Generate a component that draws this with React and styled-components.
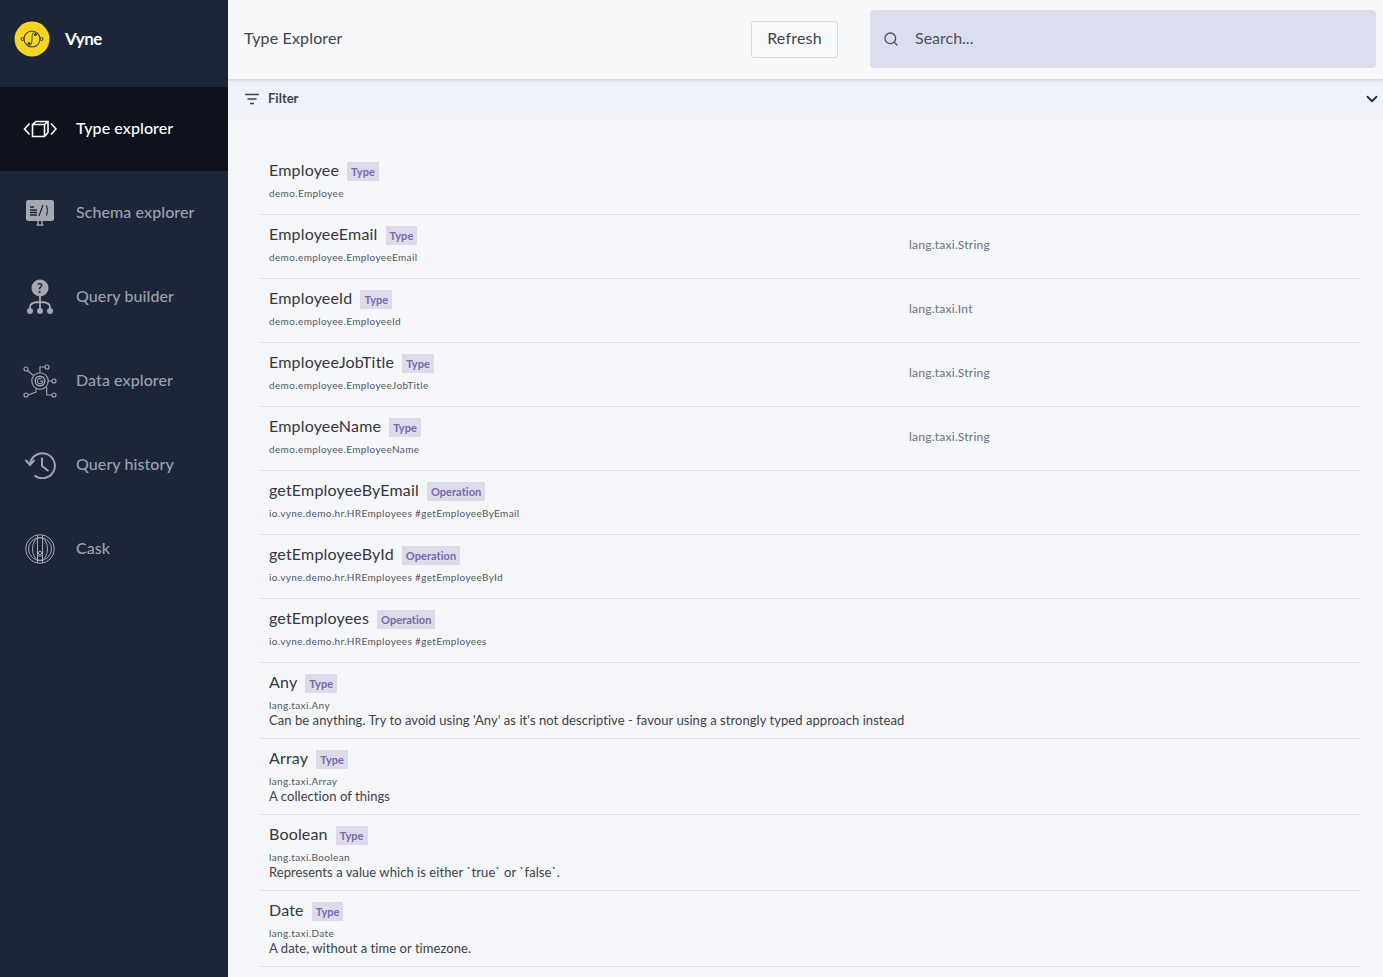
import React from 'react'
import styled, { createGlobalStyle } from 'styled-components'
import { Search, ChevronDown } from 'lucide-react'

const GlobalStyle = createGlobalStyle`
    html, body {
        margin: 0;
        padding: 0;
        height: 100%;
        overflow: hidden;
        font-family: Lato, "Open Sans", sans-serif;
        background: #f5f6fa;
    }
    * { box-sizing: border-box; }
`

const Page = styled.div`
    display: flex;
    width: 1383px;
    height: 977px;
    overflow: hidden;
`

const Sidebar = styled.nav`
    width: 228px;
    flex-shrink: 0;
    background: #1d2639;
    display: flex;
    flex-direction: column;
`

const Brand = styled.div`
    height: 79px;
    margin-bottom: 8px;
    display: flex;
    align-items: center;
    padding-left: 14px;
    gap: 15px;
    border-bottom: 1px solid #182031;
`

const BrandName = styled.span`
    color: #fff;
    font-size: 17px;
    font-weight: 700;
    letter-spacing: -0.6px;
    margin-bottom: 2px;
`

const NavItem = styled.div`
    height: 84px;
    display: flex;
    align-items: center;
    gap: 16px;
    padding-left: 20px;
    background: ${p => (p.$active ? '#0d121c' : 'transparent')};
    color: ${p => (p.$active ? '#ffffff' : '#9ca1ab')};
    font-size: 16px;
    font-weight: 500;
    letter-spacing: 0.08px;
`

const NavIcon = styled.span`
    width: 40px;
    height: 40px;
    display: flex;
    align-items: center;
    justify-content: center;
    flex-shrink: 0;
`

const NavLabel = styled.span`
    margin-bottom: 4px;
`

const Main = styled.main`
    flex: 1;
    min-width: 0;
    display: flex;
    flex-direction: column;
`

const Header = styled.header`
    height: 79px;
    background: #f7f8fa;
    display: flex;
    align-items: center;
    padding: 0 7px 0 16px;
    box-shadow: 0 1px 4px rgba(0, 0, 0, 0.16);
    position: relative;
`

const Title = styled.h1`
    flex: 1;
    margin: 0 0 4px;
    font-size: 16px;
    font-weight: 400;
    color: #3d4248;
    letter-spacing: 0.15px;
`

const RefreshButton = styled.button`
    width: 87px;
    height: 37px;
    margin-right: 32px;
    padding: 0 0 4px;
    background: #f8f9fb;
    border: 1px solid #d9dadd;
    border-radius: 3px;
    font-family: inherit;
    font-size: 16px;
    color: #41454b;
    letter-spacing: 0.2px;
`

const SearchBox = styled.div`
    width: 506px;
    height: 58px;
    margin-bottom: 2px;
    background: #dbdfed;
    border-radius: 4px;
    display: flex;
    align-items: center;
    gap: 16px;
    padding-left: 13px;
    color: #4c5159;
    font-size: 16px;
`

const SearchText = styled.span`
    margin-bottom: 2px;
`

const FilterBar = styled.div`
    height: 40px;
    background: #eef3fb;
    display: flex;
    align-items: center;
    padding: 0 2px 0 17px;
    gap: 9px;
    font-size: 13px;
    font-weight: 700;
    color: #3b4452;
`

const FilterLabel = styled.span`
    flex: 1;
    margin-bottom: 2px;
`

const List = styled.div`
    padding: 32px 23px 0 32px;
    display: flex;
    flex-direction: column;
`

const Row = styled.div`
    height: ${p => (p.$doc ? '76px' : '64px')};
    border-bottom: 1px solid #e0e2e6;
    padding: 0 9px;
    display: flex;
    align-items: flex-start;
`

const RowBody = styled.div`
    width: 640px;
    flex-shrink: 0;
    white-space: nowrap;
`

const NameLine = styled.div`
    display: flex;
    align-items: center;
    height: 24px;
    margin-top: 6px;
`

const Name = styled.span`
    font-size: 16px;
    color: #34373d;
    letter-spacing: 0.18px;
    margin-right: 8px;
`

const Badge = styled.span`
    height: 19px;
    margin-top: 4px;
    padding: 0 4px;
    display: flex;
    align-items: center;
    background: #dddbea;
    color: #7569ab;
    font-size: 11px;
    font-weight: 700;
    letter-spacing: 0.05px;
`

const QualifiedName = styled.div`
    font-size: 10px;
    line-height: 13px;
    margin-top: 6px;
    color: #505863;
    letter-spacing: 0.37px;
`

const Doc = styled.div`
    font-size: 13px;
    line-height: 17px;
    color: #3d4046;
    letter-spacing: 0.06px;
`

const BaseType = styled.div`
    align-self: center;
    margin-bottom: 4px;
    font-size: 12px;
    color: #68717e;
    letter-spacing: 0.23px;
`

const members = [
    { name: 'Employee', kind: 'Type', path: 'demo.Employee' },
    { name: 'EmployeeEmail', kind: 'Type', path: 'demo.employee.EmployeeEmail', base: 'lang.taxi.String' },
    { name: 'EmployeeId', kind: 'Type', path: 'demo.employee.EmployeeId', base: 'lang.taxi.Int' },
    { name: 'EmployeeJobTitle', kind: 'Type', path: 'demo.employee.EmployeeJobTitle', base: 'lang.taxi.String' },
    { name: 'EmployeeName', kind: 'Type', path: 'demo.employee.EmployeeName', base: 'lang.taxi.String' },
    { name: 'getEmployeeByEmail', kind: 'Operation', path: 'io.vyne.demo.hr.HREmployees #getEmployeeByEmail' },
    { name: 'getEmployeeById', kind: 'Operation', path: 'io.vyne.demo.hr.HREmployees #getEmployeeById' },
    { name: 'getEmployees', kind: 'Operation', path: 'io.vyne.demo.hr.HREmployees #getEmployees' },
    { name: 'Any', kind: 'Type', path: 'lang.taxi.Any', doc: "Can be anything. Try to avoid using 'Any' as it's not descriptive - favour using a strongly typed approach instead" },
    { name: 'Array', kind: 'Type', path: 'lang.taxi.Array', doc: 'A collection of things' },
    { name: 'Boolean', kind: 'Type', path: 'lang.taxi.Boolean', doc: 'Represents a value which is either `true` or `false`.' },
    { name: 'Date', kind: 'Type', path: 'lang.taxi.Date', doc: 'A date, without a time or timezone.' },
]

const VyneLogo = () => (
    <svg width="36" height="36" viewBox="0 0 36 36">
        <circle cx="18" cy="18" r="17.5" fill="#f6d523" />
        <circle cx="18" cy="18" r="8" fill="none" stroke="#3a3a2a" strokeWidth="1.1" />
        <path d="M21 10.5C15 14 21 21 15 25.5" fill="none" stroke="#3a3a2a" strokeWidth="1" />
        <circle cx="8.5" cy="18" r="1.5" fill="none" stroke="#3a3a2a" />
        <circle cx="27.5" cy="18" r="1.5" fill="none" stroke="#3a3a2a" />
        <circle cx="21.5" cy="13.5" r="1.5" fill="#3a3a2a" />
        <circle cx="15" cy="22.5" r="1.5" fill="#3a3a2a" />
    </svg>
)

const TypeIcon = () => (
    <svg width="34" height="18" viewBox="0 0 34 18" fill="none" stroke="#fff" strokeWidth="1.6">
        <path d="M6.500 3.500 1.500 9 6.500 14.500M28 3.500 33 9 28 14.500" />
        <path d="M9.500 4.500H21.500V16.500H9.500ZM9.500 4.500 13 1.500H25V12.500L21.500 16.500M21.500 4.500 25 1.500" />
    </svg>
)

const SchemaIcon = () => (
    <svg width="30" height="28" viewBox="0 0 30 28">
        <rect x="1" y="1" width="28" height="21" rx="2.5" fill="#a4a7b0" />
        <path d="M11.500 26h7M13 22v3.500M17 22v3.500" stroke="#a4a7b0" strokeWidth="1.4" />
        <path d="M5 8h4M5 11h7M5 13.500h7M5 16h7" stroke="#1d2639" strokeWidth="1.300" />
        <path d="M14 17 18 6M21 6.500c2 0 0 4.500 2 5-2 .5 0 5-2 5" fill="none" stroke="#1d2639" strokeWidth="1.200" />
    </svg>
)

const BuilderIcon = () => (
    <svg width="28" height="36" viewBox="0 0 28 36">
        <circle cx="14" cy="9" r="8.500" fill="#a4a7b0" />
        <text x="14" y="13.500" textAnchor="middle" fontSize="12.500" fontWeight="700" fontFamily="Lato, sans-serif" fill="#1d2639">?</text>
        <path d="M14 17v15M4 31v-3c0-3 3-5 10-5s10 2 10 5v3" fill="none" stroke="#a4a7b0" strokeWidth="1.800" />
        <circle cx="4" cy="32" r="3" fill="#a4a7b0" />
        <circle cx="14" cy="32" r="3" fill="#a4a7b0" />
        <circle cx="24" cy="32" r="3" fill="#a4a7b0" />
    </svg>
)

const DataIcon = () => (
    <svg width="36" height="36" viewBox="0 0 36 36" fill="none" stroke="#a4a7b0" strokeWidth="1.100">
        <circle cx="18" cy="18" r="8.200" />
        <circle cx="18" cy="18" r="4.800" strokeWidth="1.400" />
        <path d="M19.500 15.800a2.700 2.700 0 1 0 1.300 2.200h-2.800" />
        <circle cx="4" cy="6" r="2" />
        <circle cx="25" cy="4" r="2" />
        <circle cx="32" cy="18" r="2" />
        <circle cx="32" cy="32" r="2" />
        <circle cx="4" cy="32" r="2" />
        <path d="M5.500 7.500 11.500 12.500M23 4H18V9.800M26.200 18H30M24.700 24V32H30M14 26V29L6 32" />
    </svg>
)

const HistoryIcon = () => (
    <svg width="32" height="28" viewBox="0 0 32 28" fill="none" stroke="#a4a7b0" strokeWidth="1.900">
        <path d="M6 13A12.500 12.500 0 1 1 10.500 24.500" />
        <path d="M1.500 9 6 14 10.500 9" />
        <path d="M18 6.500V15L24.500 20" />
    </svg>
)

const CaskIcon = () => (
    <svg width="30" height="30" viewBox="0 0 30 30" fill="none" stroke="#a4a7b0" strokeWidth="1">
        <circle cx="15" cy="15" r="14.300" />
        <circle cx="15" cy="15" r="11.500" />
        <ellipse cx="15" cy="15" rx="7.500" ry="11.500" />
        <path d="M12.500 1v28M17.500 1v28M12.500 22h5" />
        <circle cx="15" cy="19" r="1.700" />
    </svg>
)

const navItems = [
    { label: 'Type explorer', icon: <TypeIcon />, active: true },
    { label: 'Schema explorer', icon: <SchemaIcon /> },
    { label: 'Query builder', icon: <BuilderIcon /> },
    { label: 'Data explorer', icon: <DataIcon /> },
    { label: 'Query history', icon: <HistoryIcon /> },
    { label: 'Cask', icon: <CaskIcon /> },
]

const FilterIcon = () => (
    <svg width="14" height="12" viewBox="0 0 14 12" fill="none" stroke="#3b4452" strokeWidth="1.500">
        <path d="M0 1.500h14M2.500 6h9M5 10.500h4" />
    </svg>
)

export default function App() {
    return (
        <Page>
            <GlobalStyle />
            <Sidebar>
                <Brand>
                    <VyneLogo />
                    <BrandName>Vyne</BrandName>
                </Brand>
                {navItems.map(item => (
                    <NavItem key={item.label} $active={item.active}>
                        <NavIcon>{item.icon}</NavIcon>
                        <NavLabel>{item.label}</NavLabel>
                    </NavItem>
                ))}
            </Sidebar>
            <Main>
                <Header>
                    <Title>Type Explorer</Title>
                    <RefreshButton>Refresh</RefreshButton>
                    <SearchBox>
                        <Search size={16} strokeWidth={2} color="#4c5159" />
                        <SearchText>Search...</SearchText>
                    </SearchBox>
                </Header>
                <FilterBar>
                    <FilterIcon />
                    <FilterLabel>Filter</FilterLabel>
                    <ChevronDown size={18} strokeWidth={2.500} color="#1f3350" />
                </FilterBar>
                <List>
                    {members.map(m => (
                        <Row key={m.name} $doc={!!m.doc}>
                            <RowBody>
                                <NameLine>
                                    <Name>{m.name}</Name>
                                    <Badge>{m.kind}</Badge>
                                </NameLine>
                                <QualifiedName>{m.path}</QualifiedName>
                                {m.doc && <Doc>{m.doc}</Doc>}
                            </RowBody>
                            {m.base && <BaseType>{m.base}</BaseType>}
                        </Row>
                    ))}
                </List>
            </Main>
        </Page>
    )
}
